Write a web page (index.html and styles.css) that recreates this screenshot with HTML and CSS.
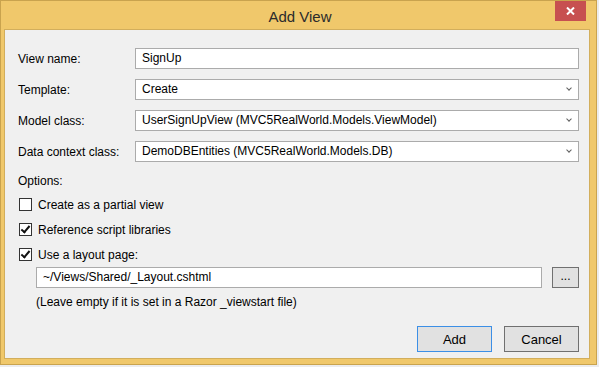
FILE: index.html
```html
<!DOCTYPE html>
<html lang="en">
  <head>
    <meta charset="UTF-8" />
    <title>Add View</title>
    <link rel="stylesheet" href="styles.css">
  </head>
  <body>
    <div class="window">
      <div class="titlebar">
        <span class="caption">Add View</span>
        <span class="close">
          <svg width="9" height="8" viewBox="0 0 9 8"><path d="M1 0.5 L8 7.5 M8 0.5 L1 7.5" stroke="#fff" stroke-width="2"/></svg>
        </span>
      </div>

      <div class="client">
        <div class="fields">
          <label>View name:</label>
          <div class="box">SignUp</div>

          <label>Template:</label>
          <div class="box combo">Create<span class="arrow"></span></div>

          <label>Model class:</label>
          <div class="box combo">UserSignUpView (MVC5RealWorld.Models.ViewModel)<span class="arrow"></span></div>

          <label>Data context class:</label>
          <div class="box combo">DemoDBEntities (MVC5RealWorld.Models.DB)<span class="arrow"></span></div>
        </div>

        <div class="options-title">Options:</div>
        <div class="check-line"><span class="check"></span>Create as a partial view</div>
        <div class="check-line"><span class="check on"></span>Reference script libraries</div>
        <div class="check-line"><span class="check on"></span>Use a layout page:</div>

        <div class="layout-line">
          <div class="box path">~/Views/Shared/_Layout.cshtml</div>
          <div class="btn small">...</div>
        </div>
        <div class="hint">(Leave empty if it is set in a Razor _viewstart file)</div>

        <div class="actions">
          <div class="btn default">Add</div>
          <div class="btn">Cancel</div>
        </div>
      </div>
    </div>
  </body>
</html>
```

FILE: styles.css
```css
* {
  box-sizing: border-box;
}
html,
body {
  margin: 0;
  padding: 0;
}
body {
  width: 599px;
  height: 367px;
  background: #ececec;
  font-family: "Liberation Sans", Arial, sans-serif;
  font-size: 12px;
  color: #000;
}

.window {
  width: 597px;
  height: 365px;
  background: #f0c86b;
  border: 1px solid #c9a34e;
  padding: 0 6px 5px 3px;
  display: flex;
  flex-direction: column;
}

.titlebar {
  height: 28px;
  position: relative;
  display: flex;
  justify-content: center;
  align-items: center;
}
.titlebar .caption {
  font-size: 15px;
  color: #2b2b2b;
  padding-top: 3px;
  margin-left: 6px;
}
.titlebar .close {
  position: absolute;
  right: 4px;
  top: 0;
  width: 31px;
  height: 20px;
  background: #c75050;
  display: flex;
  align-items: center;
  justify-content: center;
}

.client {
  flex: 1;
  background: #f0f0f0;
  border: 1px solid #d2ae5c;
  padding: 18px 10px 6px 13px;
  display: flex;
  flex-direction: column;
}

.fields {
  display: grid;
  grid-template-columns: 117px 1fr;
  grid-auto-rows: 21px;
  row-gap: 10px;
  align-items: center;
}

.box {
  height: 21px;
  background: #fff;
  border: 1px solid #ababab;
  padding: 0 6px;
  line-height: 19px;
  white-space: nowrap;
  position: relative;
}
.combo .arrow {
  position: absolute;
  right: 7px;
  top: 6px;
  width: 4px;
  height: 4px;
  border-right: 1px solid #606060;
  border-bottom: 1px solid #606060;
  transform: rotate(45deg);
}

.options-title {
  margin-top: 11px;
  line-height: 16px;
}

.check-line {
  height: 25px;
  display: flex;
  align-items: center;
  margin-left: 1px;
}
.options-title + .check-line {
  margin-top: 3px;
}
.check {
  width: 13px;
  height: 13px;
  border: 1px solid #333;
  background: #fff;
  margin-right: 6px;
  position: relative;
}
.check.on::after {
  content: "";
  position: absolute;
  left: 3px;
  top: 0px;
  width: 3px;
  height: 7px;
  border-right: 2px solid #111;
  border-bottom: 2px solid #111;
  transform: rotate(40deg);
}

.layout-line {
  display: flex;
  gap: 10px;
  padding-left: 18px;
  height: 21px;
}
.box.path {
  flex: 1;
}

.hint {
  margin-top: 6px;
  padding-left: 18px;
  line-height: 16px;
}

.btn {
  background: #e1e1e1;
  border: 1px solid #707070;
  display: flex;
  align-items: center;
  justify-content: center;
}
.btn.small {
  width: 27px;
  height: 21px;
  padding-bottom: 3px;
}

.actions {
  margin-top: auto;
  display: flex;
  justify-content: flex-end;
  gap: 12px;
}
.actions .btn {
  width: 75px;
  height: 26px;
  font-size: 13px;
}
.actions .btn.default {
  border-color: #3c8fe6;
}
```
